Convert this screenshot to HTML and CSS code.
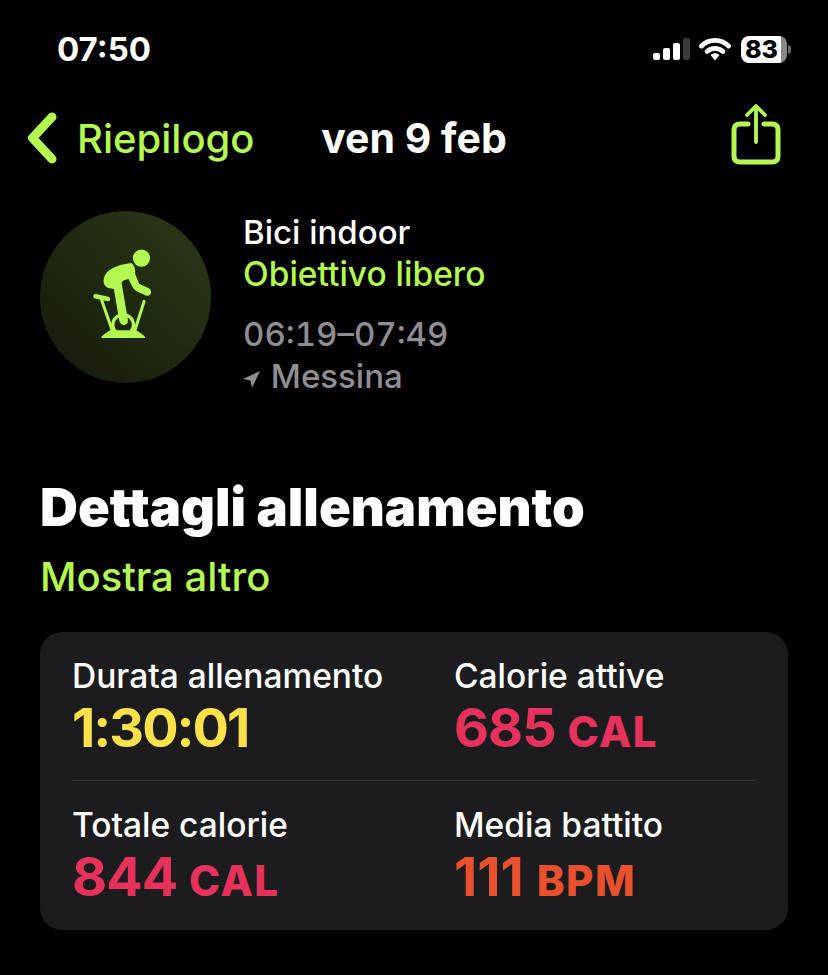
FILE: index.html
```html
<!DOCTYPE html>
<html lang="it">
<head>
    <meta charset="UTF-8">
    <meta name="viewport" content="width=device-width, initial-scale=1.0">
    <title>Dettagli allenamento</title>
    <link rel="stylesheet" href="styles.css">
</head>
<body>
    <header class="status">
        <span class="time">07:50</span>
        <div class="status-icons">
            <div class="signal">
                <span class="bar bar1"></span>
                <span class="bar bar2"></span>
                <span class="bar bar3"></span>
                <span class="bar bar4"></span>
            </div>
            <svg class="wifi" viewBox="0 0 32 24">
                <path d="M2.500 9 C10 1.500 22 1.500 29.500 9" fill="none" stroke="#fff" stroke-width="4.800" stroke-linecap="round"/>
                <path d="M8 14.500 C12.500 10.300 19.500 10.300 24 14.500" fill="none" stroke="#fff" stroke-width="4.600" stroke-linecap="round"/>
                <path d="M11.500 18 C14.500 15.600 17.500 15.600 20.500 18 L16 23.500 Z" fill="#fff"/>
            </svg>
            <div class="battery"><span class="battery-level">83</span></div>
            <span class="battery-nub"></span>
        </div>
    </header>

    <nav class="nav">
        <a class="back">
            <svg class="chevron" viewBox="0 0 32 52">
                <path d="M25 5 L5.500 26 L25 47" fill="none" stroke="#b4f852" stroke-width="9" stroke-linecap="round" stroke-linejoin="round"/>
            </svg>
            <span>Riepilogo</span>
        </a>
        <h1 class="nav-title">ven 9 feb</h1>
        <svg class="share" viewBox="0 0 50 62">
            <path d="M17 20 H9 Q3 20 3 26 V52 Q3 58 9 58 H41 Q47 58 47 52 V26 Q47 20 41 20 H33" fill="none" stroke="#b4f852" stroke-width="5" stroke-linecap="round"/>
            <path d="M25 38 V3 M16 11 L25 2 L34 11" fill="none" stroke="#b4f852" stroke-width="3.800" stroke-linecap="round" stroke-linejoin="round"/>
        </svg>
    </nav>

    <section class="workout">
        <div class="workout-icon">
            <svg viewBox="30 35 514 514">
                <circle cx="335" cy="175" r="26" fill="#b4f852"/>
                <path d="M305 190 C275 193 245 203 231 218 C218 232 216 258 236 265 L252 268 L268 362 Q272 378 284 376 Q296 374 294 360 L276 254 Q274 246 282 242 L296 238 L308 262 Q312 270 320 275 L350 288 Q362 290 364 278 Q364 268 354 264 L328 252 L316 222 Q318 200 305 190 Z" fill="#b4f852"/>
                <g fill="none" stroke="#b4f852" stroke-linecap="round" stroke-linejoin="round">
                    <path d="M197 290 L234 298" stroke-width="14"/>
                    <path d="M215 300 L248 395 M343 305 L316 390" stroke-width="9"/>
                    <circle cx="280" cy="376" r="31" stroke-width="10"/>
                </g>
                <path d="M214 415 Q214 410 220 406 L240 392 H320 L340 406 Q346 410 346 415 Z" fill="#b4f852"/>
            </svg>
        </div>
        <div class="workout-info">
            <p class="workout-name">Bici indoor</p>
            <p class="workout-goal">Obiettivo libero</p>
            <p class="workout-time">06:19–07:49</p>
            <p class="workout-place">
                <svg class="arrow" viewBox="0 0 16 16"><path d="M16 0 L8.500 16 L7 9 L0 7.500 Z" fill="#8e8e93"/></svg>
                Messina
            </p>
        </div>
    </section>

    <section class="details">
        <h2>Dettagli allenamento</h2>
        <a class="more">Mostra altro</a>
        <div class="card">
            <div class="row">
                <div class="stat">
                    <p class="label">Durata allenamento</p>
                    <p class="value yellow">1:30:01</p>
                </div>
                <div class="stat">
                    <p class="label">Calorie attive</p>
                    <p class="value red">685 <span class="unit">CAL</span></p>
                </div>
            </div>
            <div class="row">
                <div class="stat">
                    <p class="label">Totale calorie</p>
                    <p class="value red">844 <span class="unit">CAL</span></p>
                </div>
                <div class="stat">
                    <p class="label">Media battito</p>
                    <p class="value orange">111 <span class="unit">BPM</span></p>
                </div>
            </div>
        </div>
    </section>
</body>
</html>
```

FILE: styles.css
```css
* {
    box-sizing: border-box;
}
html, body {
    height: 100%;
}
body {
    margin: 0;
    background-color: #000;
    color: #fff;
    font-family: Inter, "Noto Sans", sans-serif;
    overflow: hidden;
}
p, h1, h2 {
    margin: 0;
}

/* barra di stato */
.status {
    display: flex;
    justify-content: space-between;
    align-items: center;
    height: 62px;
    padding: 36px 37px 0 57px;
}
.time {
    font-size: 33px;
    font-weight: 700;
    line-height: 36px;
}
.status-icons {
    display: flex;
    align-items: center;
}
.signal {
    display: flex;
    align-items: flex-end;
    gap: 3px;
    height: 22px;
    margin-right: 9px;
}
.bar {
    width: 7px;
    background-color: #fff;
    border-radius: 2px;
}
.bar1 { height: 7px; }
.bar2 { height: 12px; }
.bar3 { height: 17px; }
.bar4 { height: 22px; background-color: #3a3a3c; }
.wifi {
    width: 32px;
    height: 24px;
    margin-right: 10px;
}
.battery {
    width: 46px;
    height: 27px;
    border-radius: 8px;
    background: linear-gradient(to right, #fff 87%, #8a8a8a 87%);
    color: #000;
    text-align: center;
    font-size: 25px;
    font-weight: 800;
    line-height: 27px;
}
.battery-level {
    margin-right: 5px;
}
.battery-nub {
    width: 3px;
    height: 9px;
    margin-left: 1px;
    background-color: #6a6a6a;
    border-radius: 0 3px 3px 0;
}

/* navigazione */
.nav {
    display: grid;
    grid-template-columns: 1fr auto 1fr;
    align-items: center;
    height: 76px;
    margin-top: 38px;
    padding: 0 27px;
}
.back {
    display: flex;
    align-items: center;
    gap: 18px;
    color: #b4f852;
    font-size: 40px;
    font-weight: 500;
}
.chevron {
    width: 32px;
    height: 52px;
}
.nav-title {
    font-size: 41px;
    font-weight: 700;
    line-height: 44px;
}
.share {
    justify-self: end;
    width: 50px;
    height: 62px;
    margin-right: 20px;
    margin-bottom: 6px;
}

/* allenamento */
.workout {
    display: flex;
    gap: 32px;
    margin-top: 35px;
    padding-left: 40px;
}
.workout-icon {
    width: 171px;
    height: 172px;
    border-radius: 50%;
    background: linear-gradient(45deg, #141a0b, #2b3916);
}
.workout-icon svg {
    display: block;
    width: 171px;
    height: 172px;
}
.workout-info {
    font-size: 33.500px;
    line-height: 42px;
}
.workout-name {
    font-size: 33px;
    font-weight: 500;
}
.workout-goal {
    color: #b4f852;
    font-weight: 500;
}
.workout-time {
    margin-top: 18px;
    color: #8e8e93;
    font-size: 33px;
    font-weight: 500;
    font-feature-settings: "tnum";
}
.workout-place {
    color: #8e8e93;
    font-size: 33px;
    font-weight: 500;
}
.arrow {
    width: 17px;
    height: 17px;
    margin-right: 2px;
}

/* dettagli */
.details {
    margin-top: 83px;
    padding: 0 40px;
}
.details h2 {
    font-size: 52.500px;
    font-weight: 900;
    line-height: 54px;
}
.more {
    display: block;
    margin-top: 21px;
    color: #b4f852;
    font-size: 40px;
    font-weight: 500;
    line-height: 44px;
}
.card {
    margin-top: 33px;
    padding: 0 32px;
    height: 298px;
    background-color: #1c1c1e;
    border-radius: 22px;
}
.row {
    display: grid;
    grid-template-columns: 382px 1fr;
    height: 148px;
    padding-top: 25px;
}
.row + .row {
    height: 150px;
    border-top: 1px solid #3a3a3c;
}
.label {
    font-size: 33.500px;
    font-weight: 500;
    line-height: 38px;
}
.value {
    margin-top: 7px;
    font-size: 54px;
    font-weight: 700;
    line-height: 52px;
    letter-spacing: -1px;
}
.unit {
    font-size: 42px;
    font-weight: 800;
    letter-spacing: 1.500px;
}
.yellow { color: #fce14b; letter-spacing: -2px; }
.red { color: #e6325a; }
.orange { color: #e8502e; letter-spacing: 0; }
```
